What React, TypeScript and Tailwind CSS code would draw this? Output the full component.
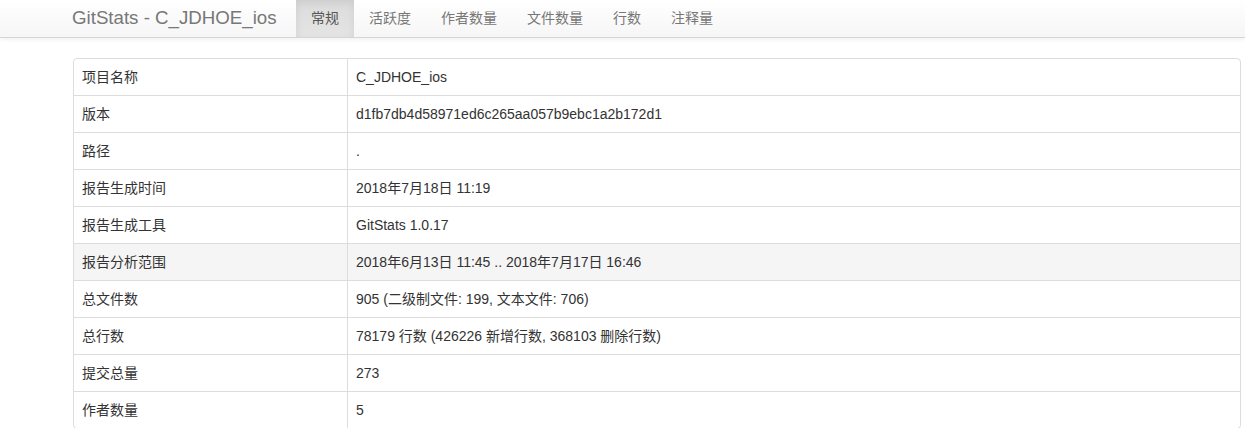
const navItems = ["常规", "活跃度", "作者数量", "文件数量", "行数", "注释量"];

const rows: { label: string; value: string; hover?: boolean }[] = [
  { label: "项目名称", value: "C_JDHOE_ios" },
  { label: "版本", value: "d1fb7db4d58971ed6c265aa057b9ebc1a2b172d1" },
  { label: "路径", value: "." },
  { label: "报告生成时间", value: "2018年7月18日 11:19" },
  { label: "报告生成工具", value: "GitStats 1.0.17" },
  { label: "报告分析范围", value: "2018年6月13日 11:45 .. 2018年7月17日 16:46", hover: true },
  { label: "总文件数", value: "905 (二级制文件: 199, 文本文件: 706)" },
  { label: "总行数", value: "78179 行数 (426226 新增行数, 368103 删除行数)" },
  { label: "提交总量", value: "273" },
  { label: "作者数量", value: "5" },
];

export default function App() {
  return (
    <div className="h-[428px] overflow-hidden bg-white font-['Liberation_Sans','Noto_Sans_CJK_SC',sans-serif] text-[14px] text-[#333]">
      <nav className="flex h-[38px] items-stretch border-b border-[#d6d6d6] bg-gradient-to-b from-white to-[#f6f6f6] pl-[72px] shadow-[0_1px_5px_rgba(0,0,0,0.075)]">
        <div className="flex w-[224px] items-center text-[18.7px] text-[#777]">GitStats - C_JDHOE_ios</div>
        <ul className="flex">
          {navItems.map((item, i) => (
            <li
              key={item}
              className={
                i === 0
                  ? "flex items-center bg-gradient-to-b from-[#dcdcdc] to-[#e4e4e4] px-[15px] text-[#555] shadow-[inset_0_3px_9px_rgba(0,0,0,0.075)]"
                  : "flex items-center px-[15px] text-[#777]"
              }
            >
              {item}
            </li>
          ))}
        </ul>
      </nav>

      <div className="ml-[73px] mt-[20px] w-[1168px] rounded-[4px] border border-[#ddd]">
        {rows.map((row, i) => (
          <div
            key={row.label}
            className={`flex ${i > 0 ? "border-t border-[#ddd]" : ""} ${row.hover ? "bg-[#f5f5f5]" : ""}`}
          >
            <div className="w-[274px] shrink-0 border-r border-[#ddd] p-2 leading-5">{row.label}</div>
            <div className="p-2 leading-5">{row.value}</div>
          </div>
        ))}
      </div>
    </div>
  );
}
